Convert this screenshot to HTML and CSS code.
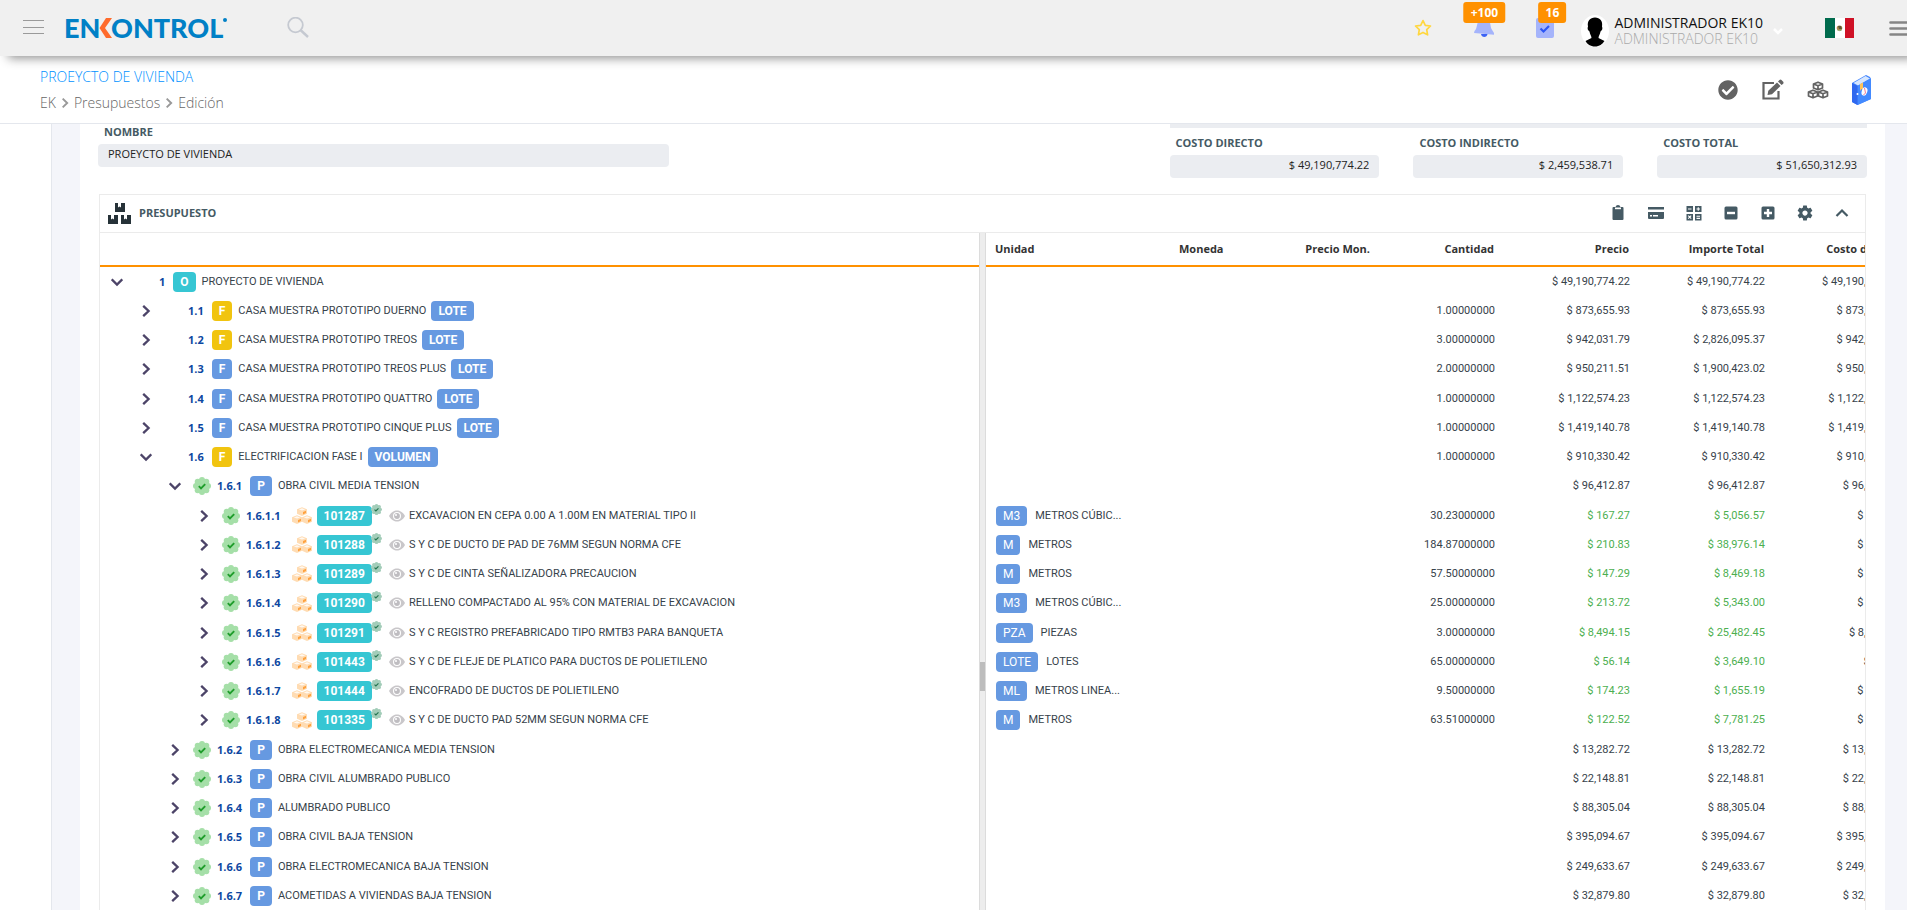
FILE: index.html
```html
<!DOCTYPE html>
<html lang="es">
<head>
<meta charset="utf-8">
<meta name="viewport" content="width=device-width, initial-scale=1">
<title>Enkontrol - Presupuestos</title>
<link rel="stylesheet" href="styles.css">
</head>
<body>
<svg class="sprite" aria-hidden="true">
  <symbol id="right" viewBox="0 0 12 12"><path d="M3.200 .8 8.600 6 3.200 11.200" fill="none" stroke="currentColor" stroke-width="2.300"/></symbol>
  <symbol id="down" viewBox="0 0 12 12"><path d="M.7 3.400 6 8.600l5.300-5.200" fill="none" stroke="currentColor" stroke-width="2.300"/></symbol>
  <symbol id="seal" viewBox="0 0 18 18"><g fill="currentColor"><circle cx="9" cy="9" r="7"/><circle cx="9" cy="3" r="3"/><circle cx="9" cy="15" r="3"/><circle cx="3" cy="9" r="3"/><circle cx="15" cy="9" r="3"/><circle cx="4.700" cy="4.700" r="3"/><circle cx="13.300" cy="4.700" r="3"/><circle cx="4.700" cy="13.300" r="3"/><circle cx="13.300" cy="13.300" r="3"/></g><path class="tick" d="m5.800 9.100 2.200 2.200 4.200-4.200" fill="none" stroke-width="1.900"/></symbol>
  <symbol id="cube" viewBox="0 0 10 9"><path d="M0 2.200 5 .3l5 1.900v4.600L5 8.900 0 6.800z" fill="#ffdcb3"/><path d="M1.800 2.400 5 1.300l3.200 1.100L5 3.600z" fill="#fff8f0"/><path d="M6 5 9 3.800v2.300L6 7.400z" fill="#ffa23f"/></symbol>
  <symbol id="cubes" viewBox="0 0 20 17"><use href="#cube" x="5" y="0" width="10" height="9"/><use href="#cube" x="0" y="8" width="10" height="9"/><use href="#cube" x="10" y="8" width="10" height="9"/></symbol>
  <symbol id="eye" viewBox="0 0 16 12"><path d="M0 6C2.500 1.800 5 .5 8 .5S13.500 1.800 16 6c-2.500 4.200-5 5.500-8 5.500S2.500 10.200 0 6z" fill="#c9c7ca"/><circle cx="8" cy="6" r="4" fill="#fff"/><circle cx="8" cy="6" r="2.900" fill="#bfbdc1"/><circle cx="7" cy="5" r="1" fill="#fff"/></symbol>
</svg>
<div class="app">
  <header class="topbar">
    <button class="plain" aria-label="Menú"><svg width="21" height="16" stroke="#9a9a9a"><path d="M0 1.500h21M0 8.500h21M0 14.500h21"/></svg></button>
    <a class="logo" href="#" aria-label="Enkontrol">
      <svg width="164" height="24" viewBox="0 0 164 24"><g class="logo-text"><text x="-1" y="22">EN</text><text x="46" y="22">ONTROL</text></g><path d="M41 2h6l-7 10 7 10h-6l-6.500-10z" fill="#ff6b2c"/><circle cx="160" cy="4" r="2" fill="#0080c6"/></svg>
    </a>
    <button class="plain search" aria-label="Buscar"><svg width="22" height="21" fill="none" stroke="#c5c9d1" stroke-width="1.800"><circle cx="8.500" cy="8" r="7.300"/><path d="m13.500 13 7.500 7" stroke-width="2.400"/></svg></button>
    <div class="tools">
      <button class="plain star" aria-label="Favoritos"><svg width="18" height="18" viewBox="0 0 18 18"><path d="m9 1.600 2.300 4.700 5.200.7-3.800 3.600.9 5.200L9 13.400l-4.600 2.400.9-5.200L1.500 7l5.200-.7z" fill="none" stroke="#ffd740" stroke-width="1.700" stroke-linejoin="round"/></svg></button>
      <button class="plain bell" aria-label="Notificaciones"><svg width="20" height="22" viewBox="0 0 20 22"><path d="M7 1h6c4 2 3 8 4.500 11L20 16v1.800L0 16l.5-2C4 11 2 4 7 1z" fill="#a5b4fb"/><path d="M7 17h6.500c-.4 4-6 4-6.500 0z" fill="#3d63f5"/></svg><span class="count">+100</span></button>
      <button class="plain tasks" aria-label="Tareas"><svg width="18" height="20"><rect width="18" height="20" rx="2" fill="#a5b4fb"/><path d="m4.500 10.500 3 3 5.500-5.500" fill="none" stroke="#2d56f5" stroke-width="2.200"/></svg><span class="count">16</span></button>
      <button class="plain user">
        <svg width="28" height="34" viewBox="0 0 28 34"><ellipse cx="14" cy="17" rx="14" ry="16" fill="#fff"/><path d="M14 3.500c5 0 8 3.500 7 9 1 2 0 4-1.500 5-.5 3-1.800 4-2 6.500l6 3c-2 3-5 5.500-9.500 5.500S6 30 4.500 27l6-3c-.2-2.500-1.500-3.500-2-6.500C7 16.500 6 14.500 7 12.500c-1-5.500 2-9 7-9z" fill="#000"/></svg>
        <span class="names"><span>ADMINISTRADOR EK10</span><span class="role">ADMINISTRADOR EK10</span></span>
        <svg width="10" height="8"><path d="m1 2 4 4 4-4" fill="none" stroke="#fff" stroke-width="2.500"/></svg>
      </button>
      <button class="plain flag" aria-label="México"><svg width="29" height="20"><path fill="#006b4d" d="M0 0h10v20H0z"/><path fill="#fff" d="M10 0h10v20H10z"/><path fill="#cf1126" d="M20 0h9v20h-9z"/><ellipse cx="14.500" cy="10" rx="2.800" ry="2.500" fill="#b08a4c"/><path d="M13 8h3l1 3h-3z" fill="#5d5636"/><path d="M12 11.500c1.500 1.500 4 1.500 5 0" stroke="#8aa66a" fill="none"/></svg></button>
      <button class="plain" aria-label="Opciones"><svg width="18" height="15" stroke="#858585" stroke-width="2.600" stroke-linecap="round"><path d="M1.500 1.500H18M1.500 7.500H18M1.500 13.500H18"/></svg></button>
    </div>
  </header>

  <section class="pagebar">
    <div>
      <h1 class="title">PROEYCTO DE VIVIENDA</h1>
      <nav class="crumbs" aria-label="Ruta"><a href="#">EK</a><svg><use href="#right"/></svg><a href="#">Presupuestos</a><svg><use href="#right"/></svg><span>Edición</span></nav>
    </div>
    <div class="page-actions">
      <button class="plain" aria-label="Autorizar"><svg width="20" height="20" viewBox="0 0 512 512" fill="#636363"><path d="M504 256c0 136.967-111.033 248-248 248S8 392.967 8 256 119.033 8 256 8s248 111.033 248 248zM227.314 387.314l184-184c6.248-6.248 6.248-16.379 0-22.627l-22.627-22.627c-6.248-6.249-16.379-6.249-22.628 0L216 308.118l-70.059-70.059c-6.248-6.248-16.379-6.248-22.628 0l-22.627 22.627c-6.248 6.248-6.248 16.379 0 22.627l104 104c6.249 6.249 16.379 6.249 22.628.001z"/></svg></button>
      <button class="plain" aria-label="Editar"><svg width="23" height="21" viewBox="0 0 23 21"><path d="M13 4H2.500v15.500h15V12" fill="none" stroke="#636363" stroke-width="2.200"/><path d="m16 3.500 3.500 3.500L11 15.300l-4.500.8.800-4.300z" fill="#636363"/><path d="m17 2.500 1.500-1.500q1-.8 2 0l1.700 1.700q.8 1 0 2L20.600 6z" fill="#636363"/></svg></button>
      <button class="plain" aria-label="Insumos"><svg width="22" height="18" viewBox="0 0 22 18" fill="#fff" stroke="#636363" stroke-width="1.700" stroke-linejoin="round"><path id="ocube" d="m6.500 3 4.500-1.800L15.500 3v4L11 8.800 6.500 7zM6.500 3 11 4.800 15.500 3M11 4.800v4"/><use href="#ocube" x="-5" y="8"/><use href="#ocube" x="5" y="8"/></svg></button>
      <button class="plain" aria-label="Manual"><svg width="20" height="32" viewBox="0 0 20 32"><path d="M0 9 14 1l4 2 1 2v20L5.500 31 0 28z" fill="#3f83ff"/><path d="m1.500 9 12-7 4.500 2.500L6 11.500z" fill="#d5e6ff"/><path d="M5.500 12 19 4.500V25L5.500 31z" fill="#438aff"/><path d="m0 9 5.500 3v19L0 28z" fill="#2f68ef"/><path d="m8 10 3-1.500v7L9.500 15 8 17z" fill="#ffc35a"/><ellipse cx="12.500" cy="17.500" rx="2.800" ry="4.200" fill="#fff" transform="rotate(18 12.500 17.500)"/><path d="m12.500 14 1 5-2 2" fill="none" stroke="#f07b94"/><circle cx="5.500" cy="20" r="1" fill="#fff"/></svg></button>
    </div>
  </section>

  <div class="stage">
    <main class="content">
      <form class="fields">
        <div class="field"><label for="nombre">NOMBRE</label><input id="nombre" value="PROEYCTO DE VIVIENDA" readonly></div>
        <div class="costs">
          <div class="strip"></div>
          <div class="field"><label for="cd">COSTO DIRECTO</label><input id="cd" value="$ 49,190,774.22" readonly></div>
          <div class="field"><label for="ci">COSTO INDIRECTO</label><input id="ci" value="$ 2,459,538.71" readonly></div>
          <div class="field"><label for="ct">COSTO TOTAL</label><input id="ct" value="$ 51,650,312.93" readonly></div>
        </div>
      </form>

      <section class="card">
        <header class="card-head">
          <svg width="24" height="22" fill="#263238"><path id="box" d="M7 1h3v4.500l1.500-1 1.500 1V1h4v9H7z"/><use href="#box" x="-7" y="12"/><use href="#box" x="6" y="12"/></svg>
          <h2>PRESUPUESTO</h2>
          <div class="card-tools">
            <button class="plain" aria-label="Portapapeles"><svg viewBox="0 0 18 18"><path d="M4.500 3H6.500q.5-2 2.500-2t2.500 2h2q1 0 1 1v11q0 1-1 1h-9q-1 0-1-1V4q0-1 1-1z"/><path d="M6 3.500h6v1.700H6z" fill="#fff"/></svg></button>
            <button class="plain wide" aria-label="Tarjeta"><svg viewBox="0 0 20 18"><path d="M2 3h16v2.600H2zM2 8h16v6q0 1-1 1H3q-1 0-1-1z"/><path d="M4 11h2v1.500H4zM7 11h5v1.500H7z" fill="#fff"/></svg></button>
            <button class="plain" aria-label="Calculadora"><svg viewBox="0 0 18 18"><path d="M1.500 2H8v6H1.500zM10 2h6.500v6H10zM1.500 10H8v6.500H1.500zM10 10h6.500v6.500H10z"/><path d="M3 5h3.500M11.500 5H15M13.250 3.300v3.400M3.200 11.700l3 3M6.200 11.700l-3 3M11.500 12.200H15M11.500 14.400H15" stroke="#fff" stroke-width="1.100"/></svg></button>
            <button class="plain" aria-label="Contraer"><svg viewBox="0 0 18 18"><rect x="2.500" y="2.500" width="13" height="13" rx="1.500"/><path d="M5 7.800h8v2.400H5z" fill="#fff"/></svg></button>
            <button class="plain" aria-label="Expandir"><svg viewBox="0 0 18 18"><rect x="2.500" y="2.500" width="13" height="13" rx="1.500"/><path d="M5 7.800h2.800V5h2.400v2.800H13v2.400h-2.800V13H7.800v-2.800H5z" fill="#fff"/></svg></button>
            <button class="plain" aria-label="Configurar"><svg viewBox="0 0 24 24"><path d="M19.430 12.980c.04-.32.07-.64.07-.98s-.03-.66-.07-.98l2.110-1.650c.19-.15.24-.42.12-.64l-2-3.460c-.12-.22-.39-.3-.61-.22l-2.490 1c-.52-.4-1.080-.73-1.690-.98l-.38-2.650C14.460 2.180 14.250 2 14 2h-4c-.25 0-.46.18-.49.42l-.38 2.650c-.61.25-1.170.59-1.690.98l-2.490-1c-.23-.09-.49 0-.61.22l-2 3.460c-.13.22-.07.49.12.64l2.110 1.650c-.04.32-.07.65-.07.98s.03.66.07.98l-2.110 1.650c-.19.15-.24.42-.12.64l2 3.460c.12.22.39.3.61.22l2.490-1c.52.4 1.080.73 1.690.98l.38 2.650c.03.24.24.42.49.42h4c.25 0 .46-.18.49-.42l.38-2.650c.61-.25 1.170-.59 1.690-.98l2.490 1c.23.09.49 0 .61-.22l2-3.460c.12-.22.07-.49-.12-.64l-2.110-1.650zM12 15.500c-1.930 0-3.500-1.570-3.500-3.500s1.570-3.500 3.500-3.500 3.500 1.570 3.500 3.500-1.570 3.500-3.500 3.500z"/></svg></button>
            <button class="plain" aria-label="Plegar"><svg viewBox="0 0 18 18"><path d="m3.500 12 5.500-5.500 5.500 5.500" fill="none" stroke="#455a64" stroke-width="2.200"/></svg></button>
          </div>
        </header>
        <div class="split">
          <div class="tree">
            <div class="tree-head"></div>
            <ul class="rows">
              <li class="row"><svg class="arrow"><use href="#down"/></svg><i class="slot"></i><b class="num">1</b><span class="tag teal">O</span><span>PROYECTO DE VIVIENDA</span></li>
              <li class="row l1"><svg class="arrow"><use href="#right"/></svg><i class="slot"></i><b class="num">1.1</b><span class="tag gold">F</span><span>CASA MUESTRA PROTOTIPO DUERNO</span><span class="tag unit">LOTE</span></li>
              <li class="row l1"><svg class="arrow"><use href="#right"/></svg><i class="slot"></i><b class="num">1.2</b><span class="tag gold">F</span><span>CASA MUESTRA PROTOTIPO TREOS</span><span class="tag unit">LOTE</span></li>
              <li class="row l1"><svg class="arrow"><use href="#right"/></svg><i class="slot"></i><b class="num">1.3</b><span class="tag">F</span><span>CASA MUESTRA PROTOTIPO TREOS PLUS</span><span class="tag unit">LOTE</span></li>
              <li class="row l1"><svg class="arrow"><use href="#right"/></svg><i class="slot"></i><b class="num">1.4</b><span class="tag">F</span><span>CASA MUESTRA PROTOTIPO QUATTRO</span><span class="tag unit">LOTE</span></li>
              <li class="row l1"><svg class="arrow"><use href="#right"/></svg><i class="slot"></i><b class="num">1.5</b><span class="tag">F</span><span>CASA MUESTRA PROTOTIPO CINQUE PLUS</span><span class="tag unit">LOTE</span></li>
              <li class="row l1"><svg class="arrow"><use href="#down"/></svg><i class="slot"></i><b class="num">1.6</b><span class="tag gold">F</span><span>ELECTRIFICACION FASE I</span><span class="tag unit">VOLUMEN</span></li>
              <li class="row l2"><svg class="arrow"><use href="#down"/></svg><svg class="slot"><use href="#seal"/></svg><b class="num">1.6.1</b><span class="tag">P</span><span>OBRA CIVIL MEDIA TENSION</span></li>
              <li class="row l3"><svg class="arrow"><use href="#right"/></svg><svg class="slot"><use href="#seal"/></svg><b class="num">1.6.1.1</b><svg class="cubes"><use href="#cubes"/></svg><span class="tag teal code">101287<svg class="mini"><use href="#seal"/></svg></span><svg class="eye"><use href="#eye"/></svg><span>EXCAVACION EN CEPA 0.00 A 1.00M EN MATERIAL TIPO II</span></li>
              <li class="row l3"><svg class="arrow"><use href="#right"/></svg><svg class="slot"><use href="#seal"/></svg><b class="num">1.6.1.2</b><svg class="cubes"><use href="#cubes"/></svg><span class="tag teal code">101288<svg class="mini"><use href="#seal"/></svg></span><svg class="eye"><use href="#eye"/></svg><span>S Y C DE DUCTO DE PAD DE 76MM SEGUN NORMA CFE</span></li>
              <li class="row l3"><svg class="arrow"><use href="#right"/></svg><svg class="slot"><use href="#seal"/></svg><b class="num">1.6.1.3</b><svg class="cubes"><use href="#cubes"/></svg><span class="tag teal code">101289<svg class="mini"><use href="#seal"/></svg></span><svg class="eye"><use href="#eye"/></svg><span>S Y C DE CINTA SEÑALIZADORA PRECAUCION</span></li>
              <li class="row l3"><svg class="arrow"><use href="#right"/></svg><svg class="slot"><use href="#seal"/></svg><b class="num">1.6.1.4</b><svg class="cubes"><use href="#cubes"/></svg><span class="tag teal code">101290<svg class="mini"><use href="#seal"/></svg></span><svg class="eye"><use href="#eye"/></svg><span>RELLENO COMPACTADO AL 95% CON MATERIAL DE EXCAVACION</span></li>
              <li class="row l3"><svg class="arrow"><use href="#right"/></svg><svg class="slot"><use href="#seal"/></svg><b class="num">1.6.1.5</b><svg class="cubes"><use href="#cubes"/></svg><span class="tag teal code">101291<svg class="mini"><use href="#seal"/></svg></span><svg class="eye"><use href="#eye"/></svg><span>S Y C REGISTRO PREFABRICADO TIPO RMTB3 PARA BANQUETA</span></li>
              <li class="row l3"><svg class="arrow"><use href="#right"/></svg><svg class="slot"><use href="#seal"/></svg><b class="num">1.6.1.6</b><svg class="cubes"><use href="#cubes"/></svg><span class="tag teal code">101443<svg class="mini"><use href="#seal"/></svg></span><svg class="eye"><use href="#eye"/></svg><span>S Y C DE FLEJE DE PLATICO PARA DUCTOS DE POLIETILENO</span></li>
              <li class="row l3"><svg class="arrow"><use href="#right"/></svg><svg class="slot"><use href="#seal"/></svg><b class="num">1.6.1.7</b><svg class="cubes"><use href="#cubes"/></svg><span class="tag teal code">101444<svg class="mini"><use href="#seal"/></svg></span><svg class="eye"><use href="#eye"/></svg><span>ENCOFRADO DE DUCTOS DE POLIETILENO</span></li>
              <li class="row l3"><svg class="arrow"><use href="#right"/></svg><svg class="slot"><use href="#seal"/></svg><b class="num">1.6.1.8</b><svg class="cubes"><use href="#cubes"/></svg><span class="tag teal code">101335<svg class="mini"><use href="#seal"/></svg></span><svg class="eye"><use href="#eye"/></svg><span>S Y C DE DUCTO PAD 52MM SEGUN NORMA CFE</span></li>
              <li class="row l2"><svg class="arrow"><use href="#right"/></svg><svg class="slot"><use href="#seal"/></svg><b class="num">1.6.2</b><span class="tag">P</span><span>OBRA ELECTROMECANICA MEDIA TENSION</span></li>
              <li class="row l2"><svg class="arrow"><use href="#right"/></svg><svg class="slot"><use href="#seal"/></svg><b class="num">1.6.3</b><span class="tag">P</span><span>OBRA CIVIL ALUMBRADO PUBLICO</span></li>
              <li class="row l2"><svg class="arrow"><use href="#right"/></svg><svg class="slot"><use href="#seal"/></svg><b class="num">1.6.4</b><span class="tag">P</span><span>ALUMBRADO PUBLICO</span></li>
              <li class="row l2"><svg class="arrow"><use href="#right"/></svg><svg class="slot"><use href="#seal"/></svg><b class="num">1.6.5</b><span class="tag">P</span><span>OBRA CIVIL BAJA TENSION</span></li>
              <li class="row l2"><svg class="arrow"><use href="#right"/></svg><svg class="slot"><use href="#seal"/></svg><b class="num">1.6.6</b><span class="tag">P</span><span>OBRA ELECTROMECANICA BAJA TENSION</span></li>
              <li class="row l2"><svg class="arrow"><use href="#right"/></svg><svg class="slot"><use href="#seal"/></svg><b class="num">1.6.7</b><span class="tag">P</span><span>ACOMETIDAS A VIVIENDAS BAJA TENSION</span></li>
            </ul>
          </div>
          <div class="splitter"><span class="grip"></span></div>
          <div class="grid">
            <table class="amounts">
              <colgroup><col class="c-unit"><col class="c-cur"><col class="c-num"><col class="c-qty"><col class="c-num"><col class="c-num"><col class="c-num"></colgroup>
              <thead><tr><th class="left">Unidad</th><th class="left">Moneda</th><th>Precio Mon.</th><th>Cantidad</th><th>Precio</th><th>Importe Total</th><th>Costo directo</th></tr></thead>
              <tbody>
                <tr><td></td><td></td><td></td><td></td><td>$ 49,190,774.22</td><td>$ 49,190,774.22</td><td>$ 49,190,774.22</td></tr>
                <tr><td></td><td></td><td></td><td>1.00000000</td><td>$ 873,655.93</td><td>$ 873,655.93</td><td>$ 873,655.93</td></tr>
                <tr><td></td><td></td><td></td><td>3.00000000</td><td>$ 942,031.79</td><td>$ 2,826,095.37</td><td>$ 942,031.79</td></tr>
                <tr><td></td><td></td><td></td><td>2.00000000</td><td>$ 950,211.51</td><td>$ 1,900,423.02</td><td>$ 950,211.51</td></tr>
                <tr><td></td><td></td><td></td><td>1.00000000</td><td>$ 1,122,574.23</td><td>$ 1,122,574.23</td><td>$ 1,122,574.23</td></tr>
                <tr><td></td><td></td><td></td><td>1.00000000</td><td>$ 1,419,140.78</td><td>$ 1,419,140.78</td><td>$ 1,419,140.78</td></tr>
                <tr><td></td><td></td><td></td><td>1.00000000</td><td>$ 910,330.42</td><td>$ 910,330.42</td><td>$ 910,330.42</td></tr>
                <tr><td></td><td></td><td></td><td></td><td>$ 96,412.87</td><td>$ 96,412.87</td><td>$ 96,412.87</td></tr>
                <tr class="priced"><td><div class="um"><span class="tag light">M3</span><span>METROS CÚBIC...</span></div></td><td></td><td></td><td>30.23000000</td><td>$ 167.27</td><td>$ 5,056.57</td><td>$ 167.27</td></tr>
                <tr class="priced"><td><div class="um"><span class="tag light">M</span><span>METROS</span></div></td><td></td><td></td><td>184.87000000</td><td>$ 210.83</td><td>$ 38,976.14</td><td>$ 210.83</td></tr>
                <tr class="priced"><td><div class="um"><span class="tag light">M</span><span>METROS</span></div></td><td></td><td></td><td>57.50000000</td><td>$ 147.29</td><td>$ 8,469.18</td><td>$ 147.29</td></tr>
                <tr class="priced"><td><div class="um"><span class="tag light">M3</span><span>METROS CÚBIC...</span></div></td><td></td><td></td><td>25.00000000</td><td>$ 213.72</td><td>$ 5,343.00</td><td>$ 213.72</td></tr>
                <tr class="priced"><td><div class="um"><span class="tag light">PZA</span><span>PIEZAS</span></div></td><td></td><td></td><td>3.00000000</td><td>$ 8,494.15</td><td>$ 25,482.45</td><td>$ 8,494.15</td></tr>
                <tr class="priced"><td><div class="um"><span class="tag light">LOTE</span><span>LOTES</span></div></td><td></td><td></td><td>65.00000000</td><td>$ 56.14</td><td>$ 3,649.10</td><td>$ 56.14</td></tr>
                <tr class="priced"><td><div class="um"><span class="tag light">ML</span><span>METROS LINEA...</span></div></td><td></td><td></td><td>9.50000000</td><td>$ 174.23</td><td>$ 1,655.19</td><td>$ 174.23</td></tr>
                <tr class="priced"><td><div class="um"><span class="tag light">M</span><span>METROS</span></div></td><td></td><td></td><td>63.51000000</td><td>$ 122.52</td><td>$ 7,781.25</td><td>$ 122.52</td></tr>
                <tr><td></td><td></td><td></td><td></td><td>$ 13,282.72</td><td>$ 13,282.72</td><td>$ 13,282.72</td></tr>
                <tr><td></td><td></td><td></td><td></td><td>$ 22,148.81</td><td>$ 22,148.81</td><td>$ 22,148.81</td></tr>
                <tr><td></td><td></td><td></td><td></td><td>$ 88,305.04</td><td>$ 88,305.04</td><td>$ 88,305.04</td></tr>
                <tr><td></td><td></td><td></td><td></td><td>$ 395,094.67</td><td>$ 395,094.67</td><td>$ 395,094.67</td></tr>
                <tr><td></td><td></td><td></td><td></td><td>$ 249,633.67</td><td>$ 249,633.67</td><td>$ 249,633.67</td></tr>
                <tr><td></td><td></td><td></td><td></td><td>$ 32,879.80</td><td>$ 32,879.80</td><td>$ 32,879.80</td></tr>
              </tbody>
            </table>
          </div>
        </div>
      </section>
    </main>
  </div>
</div>
</body>
</html>
```
FILE: styles.css
```css
* { box-sizing: border-box; }
html, body { height: 100%; overflow: hidden; }
body { margin: 0; font: 11px/16px Roboto, sans-serif; color: #37424a; background: #fff; }
svg { display: block; flex: none; }
.sprite { position: absolute; width: 0; height: 0; }
.plain { display: flex; align-items: center; padding: 0; border: 0; background: none; font: inherit; color: inherit; }
.app { display: flex; flex-direction: column; height: 100%; overflow: hidden; }

/* Top bar */
.topbar { position: relative; z-index: 2; display: flex; align-items: center; flex: none; height: 56px; padding-left: 23px; background: #f0f0f0; box-shadow: 8px 2px 10px rgba(0, 0, 0, .45); font-family: "Open Sans", sans-serif; }
.topbar > .plain { padding-bottom: 2px; }
.logo { margin-left: 21px; }
.logo svg { overflow: visible; }
.logo-text { font: 900 27px Lato, sans-serif; fill: #0080c6; }
.search { margin-left: 58px; }
.tools { display: flex; align-items: center; height: 56px; margin-left: auto; }
.star { margin-right: 42px; }
.bell, .tasks { position: relative; }
.bell { margin-right: 42px; }
.tasks { margin-right: 27px; }
.count { position: absolute; bottom: 16px; left: 50%; transform: translateX(-50%); padding: 0 7px; border-radius: 3px; background: #ff9100; color: #fff; font-size: 12px; font-weight: 700; line-height: 21px; }
.tasks .count { left: 16px; bottom: 15px; }
.user { padding-top: 6px; margin-right: 42px; }
.names { display: grid; margin: 0 10px 0 5px; text-align: left; font-size: 14px; line-height: 16px; color: #111; }
.role { color: #aaa; font-weight: 300; }
.flag { margin-right: 35px; padding-bottom: 1px; }

/* Page bar */
.pagebar { display: flex; justify-content: space-between; align-items: center; flex: none; height: 68px; padding: 0 35px 0 40px; border-bottom: 1px solid #e4e7ed; background: #fff; font-family: "Open Sans", sans-serif; font-weight: 300; }
.title { margin: 0 0 6px; font-size: 14px; line-height: 20px; font-weight: 300; color: #0091ff; }
.crumbs { display: flex; align-items: center; gap: 4px; font-size: 14px; line-height: 20px; color: #666; }
.crumbs a { color: inherit; text-decoration: none; }
.crumbs svg { width: 10px; height: 10px; color: #999; stroke-width: 3; }
.page-actions { display: flex; align-items: center; gap: 23px; }

/* Content */
.stage { display: flex; flex: 1; min-height: 0; margin-left: 51px; padding: 0 22px 0 28px; border-left: 1px solid #e4e7ed; background: #f4f5fa; overflow: hidden; }
.content { flex: 1; min-width: 0; padding: 0 19px; background: #fff; }
.fields { display: grid; grid-template-columns: 571fr 500fr 697fr; margin: 0 -1px; }
.field { display: grid; gap: 4px; align-content: start; font: 11px/16px "Open Sans", sans-serif; }
.field label { padding-left: 6px; font-weight: 700; color: #455a64; }
.field input { width: 100%; height: 23px; padding: 0 10px 4px; border: 0; border-radius: 4px; background: #ebedf1; font: 11px "Open Sans", sans-serif; color: #222; }
.costs { grid-column: 3; display: grid; grid-template-columns: repeat(3, 1fr); gap: 7px 34px; }
.costs input { text-align: right; }
.strip { grid-column: 1 / -1; height: 4px; background: #ebedf1; }

.card { margin-top: 16px; border: 1px solid #ebebeb; border-bottom: 0; }
.card-head { display: flex; align-items: center; height: 38px; padding: 0 14px 2px 8px; border-bottom: 1px solid #ebebeb; }
.card-head h2 { margin: 0 0 0 7px; font: 700 11px/16px "Open Sans", sans-serif; color: #455a64; }
.card-tools { display: flex; gap: 19px; margin-left: auto; }
.card-tools svg { width: 18px; height: 18px; fill: #455a64; }
.card-tools .wide svg { width: 20px; }

.split { display: flex; }
.tree, .grid { flex: 1 1 0; min-width: 0; overflow: hidden; }
.tree-head { height: 34px; border-bottom: 2px solid #ff9100; }
.splitter { display: flex; flex: none; width: 7px; border: 1px solid #dcdcdc; border-width: 0 1px; background: #ededed; }
.grip { width: 100%; height: 29px; margin-top: 429px; background: #bdbdbd; }

/* Tree rows */
.rows { margin: 0; padding: 0; list-style: none; }
.row { display: flex; align-items: center; height: 29px; padding-left: 11px; white-space: nowrap; }
.row:nth-child(4n) { height: 30px; }
.l1 { padding-left: 40px; }
.l2 { padding-left: 69px; }
.l3 { padding-left: 98px; }
.arrow { width: 12px; height: 12px; margin-right: 12px; color: #4c4468; }
.slot { width: 18px; height: 18px; margin-right: 6px; color: #a5dfa8; }
.slot, .mini { --tick: #1f9d2b; }
.tick { stroke: var(--tick); }
.num { margin-right: 8px; font: 700 11px/16px "Open Sans", sans-serif; color: #0d47a1; }
.tag { height: 20px; padding: 0 7px; margin-right: 6px; border-radius: 4px; background: #6699e1; color: #fff; font-size: 12px; font-weight: 700; line-height: 20px; }
.unit { margin-left: 5px; }
.gold { background: #f1c40f; }
.teal { background: #36c6d3; }
.cubes { width: 20px; height: 17px; margin: 0 5px 0 3px; }
.code { position: relative; margin-right: 17px; }
.mini { position: absolute; top: -2px; right: -10px; width: 11px; height: 11px; color: #a3cdb9; --tick: #22734e; }
.eye { width: 16px; height: 12px; margin-right: 4px; }

/* Amounts */
.amounts { width: 919px; table-layout: fixed; border-collapse: separate; border-spacing: 0; }
.c-unit { width: 184px; }
.c-cur { width: 71px; }
.c-num { width: 135px; }
.c-qty { width: 124px; }
.amounts th { height: 34px; padding: 0 6px; border-bottom: 2px solid #ff9100; font: 700 11px/16px "Open Sans", sans-serif; color: #333; text-align: right; white-space: nowrap; }
.amounts td { height: 29px; padding: 0 5px; text-align: right; white-space: nowrap; }
.amounts tbody tr:nth-child(4n) td { height: 30px; }
.amounts th.left { padding-left: 9px; text-align: left; }
.priced td:nth-child(5), .priced td:nth-child(6) { color: #4caf50; }
.um { display: flex; align-items: center; padding-left: 5px; }
.light { font-weight: 400; margin-right: 8px; }
```
